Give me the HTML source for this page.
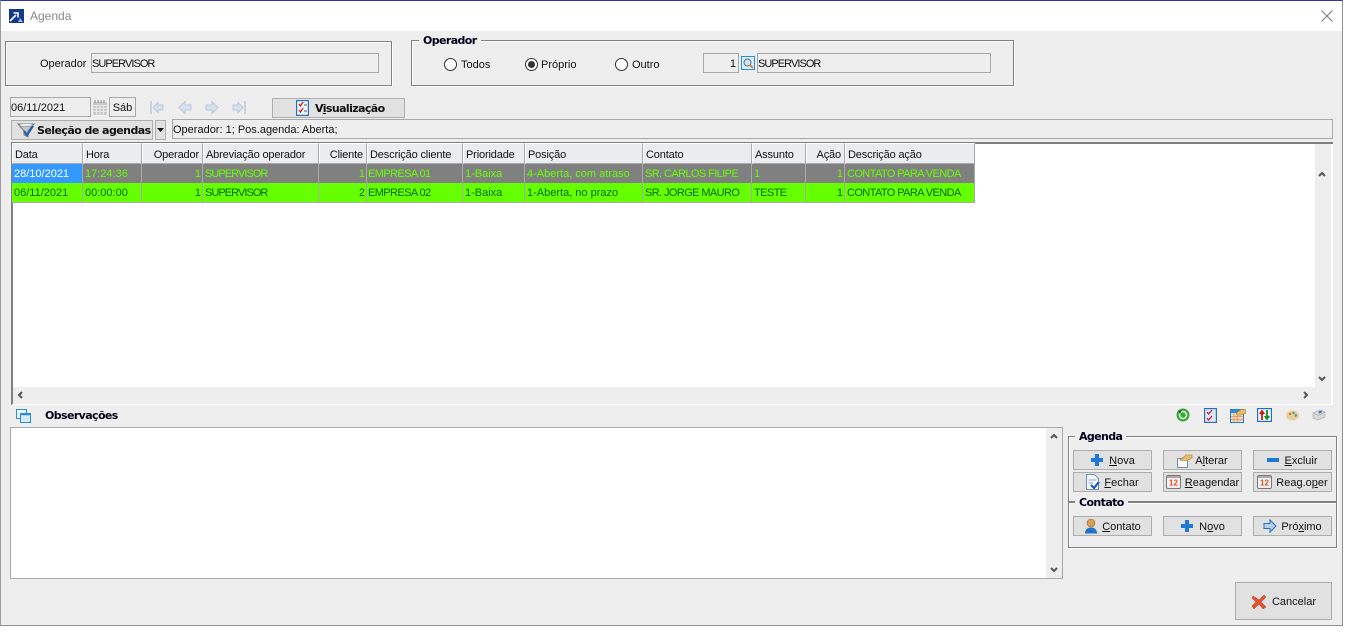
<!DOCTYPE html>
<html><head><meta charset="utf-8"><title>Agenda</title>
<style>
html,body{margin:0;padding:0;width:1357px;height:633px;overflow:hidden;background:#fff;font-family:"Liberation Sans",sans-serif;font-size:11px;color:#111}
.a{position:absolute;box-sizing:border-box;white-space:nowrap}
.win{left:0;top:0;width:1343px;height:626px;background:#eee;border:1px solid #8f8f8f;border-top:1px solid #2b35a8;border-left:1px solid #9a9a9a}
.title{left:1px;top:1px;width:1341px;height:30px;background:#fff}
.grp{border:1px solid #808080;box-shadow:1px 1px 0 #fff,inset 1px 1px 0 #fff}
.leg{background:#eee;font-family:"DejaVu Sans",sans-serif;font-weight:bold;font-size:11px;color:#00001a;padding:0 4px;line-height:13px;letter-spacing:-.6px;margin-top:1px}
.inp{background:#eee;border:1px solid #a8a8a8;line-height:20px;height:20px;padding-left:0;overflow:hidden}
.btn{background:#e1e1e1;border:1px solid #adadad;display:flex;align-items:center;justify-content:center;line-height:16px}
.btn svg{margin-right:4px;flex:none}
.btn span{position:relative;top:1px}
.t{line-height:14px;margin-top:1px}
u{text-decoration:underline}
.h{top:143px;height:21px;background:#e9edf0;border-top:1px solid #fff;border-left:1px solid #fff;border-right:1px solid #a9a9a9;border-bottom:1px solid #a9a9a9;line-height:22px;padding:0 3px 0 2px;overflow:hidden;letter-spacing:-.15px}
.c{height:20px;line-height:21px;padding:0 1px 0 2px;border-right:1px solid #a9a9a9;border-bottom:1px solid #a9a9a9;overflow:hidden}
.cap{letter-spacing:-.6px}
.sup{letter-spacing:-.95px}
.r1{top:164px;background:#808080;color:#66ff00}
.r2{top:183px;background:#66ff00;color:#0b6b00}
.r{text-align:right}
.rd{width:13px;height:13px;border:1px solid #333;border-radius:50%;background:#fff}
.rd i{position:absolute;left:2px;top:2px;width:7px;height:7px;border-radius:50%;background:#333}
svg{display:block}
.abs{position:absolute}
</style></head><body>
<div class="a win"></div>
<div class="a title"></div>
<svg class="abs" style="left:9px;top:9px" width="15" height="14" viewBox="0 0 15 14"><rect width="15" height="14" fill="#15398f"/><path d="M1 12L7 6M4.500 4H9V8.500" stroke="#fff" stroke-width="1.600" fill="none"/><path d="M9 13L11 9L14 13Z" fill="#9db4dc"/></svg>
<div class="a t" style="left:30px;top:8px;font-size:12px;color:#8a8a8a">Agenda</div>
<svg class="abs" style="left:1321px;top:10px" width="12" height="12" viewBox="0 0 12 12"><path d="M.5.500L11.500 11.500M11.500.500L.5 11.500" stroke="#777" stroke-width="1"/></svg>

<div class="a grp" style="left:5px;top:41px;width:387px;height:45px"></div>
<div class="a t" style="left:40px;top:56px">Operador</div>
<div class="a inp sup" style="left:91px;top:53px;width:288px">SUPERVISOR</div>

<div class="a grp" style="left:411px;top:40px;width:603px;height:46px"></div>
<div class="a leg" style="left:419px;top:33px">Operador</div>
<div class="a rd" style="left:444px;top:58px"></div><div class="a t" style="left:461px;top:57px">Todos</div>
<div class="a rd" style="left:525px;top:58px"><i></i></div><div class="a t" style="left:541px;top:57px">Próprio</div>
<div class="a rd" style="left:615px;top:58px"></div><div class="a t" style="left:632px;top:57px">Outro</div>
<div class="a inp" style="left:703px;top:53px;width:36px;text-align:right;padding-right:2px">1</div>
<svg class="abs" style="left:741px;top:56px" width="14" height="14" viewBox="0 0 14 14"><rect x=".5" y=".5" width="13" height="13" fill="#dbeefc" stroke="#2a8be0"/><circle cx="6.500" cy="6.500" r="3.500" fill="#cfe3f2" stroke="#55708a"/><path d="M9 9L12 12" stroke="#e08a2a" stroke-width="2"/></svg>
<div class="a inp sup" style="left:757px;top:53px;width:234px">SUPERVISOR</div>

<div class="a inp" style="left:10px;top:97px;width:81px">06/11/2021</div>
<svg class="abs" style="left:93px;top:100px" width="14" height="15" viewBox="0 0 14 15"><rect y="2" width="14" height="13" fill="#c9c9c9"/><path d="M2 0V3M5 0V3M8 0V3M11 0V3" stroke="#888"/><path d="M0 5.500H14M0 8.500H14M0 11.500H14M3.500 5V15M7 5V15M10.500 5V15" stroke="#eee" stroke-width=".8"/></svg>
<div class="a inp" style="left:109px;top:97px;width:27px;text-align:center;background:#eee">Sáb</div>
<svg class="abs" style="left:150px;top:100px" width="14" height="15" viewBox="0 0 14 15"><path d="M1 1V14" stroke="#b9c8d8" stroke-width="1.500"/><path d="M3 7.500L8 2.500V5H13V10H8V12.500Z" fill="#d6e3ef" stroke="#b9c8d8"/></svg>
<svg class="abs" style="left:178px;top:100px" width="14" height="15" viewBox="0 0 14 15"><path d="M1 7.500L7 1.500V5H13V10H7V13.500Z" fill="#d6e3ef" stroke="#b9c8d8"/></svg>
<svg class="abs" style="left:205px;top:100px" width="14" height="15" viewBox="0 0 14 15"><path d="M13 7.500L7 1.500V5H1V10H7V13.500Z" fill="#d6e3ef" stroke="#b9c8d8"/></svg>
<svg class="abs" style="left:232px;top:100px" width="14" height="15" viewBox="0 0 14 15"><path d="M13 1V14" stroke="#b9c8d8" stroke-width="1.500"/><path d="M11 7.500L6 2.500V5H1V10H6V12.500Z" fill="#d6e3ef" stroke="#b9c8d8"/></svg>
<div class="a btn" style="left:272px;top:98px;width:133px;height:20px;font-family:'DejaVu Sans',sans-serif;font-weight:bold;color:#111;letter-spacing:-.6px;justify-content:flex-start;padding-left:23px"><svg width="13" height="16" viewBox="0 0 13 16" style="margin-right:6px"><rect x=".5" y=".5" width="12" height="15" fill="#eef4fb" stroke="#2a6fb8" stroke-width="1.400"/><path d="M3 4L4.500 6L7 2M3 10L4.500 12L7 8" stroke="#d02020" fill="none" stroke-width="1.300"/><path d="M8 5H11M8 11H11" stroke="#555"/></svg><span>V<u>i</u>sualização</span></div>
<div class="a btn" style="left:11px;top:120px;width:142px;height:20px;font-family:'DejaVu Sans',sans-serif;font-weight:bold;color:#111;letter-spacing:-.55px;justify-content:flex-start;padding-left:5px"><svg width="18" height="16" viewBox="0 0 18 16" style="margin-right:2px"><path d="M1 2H17L11 9V15L7 13V9Z" fill="#c4c6c9" stroke="#777"/><ellipse cx="9" cy="3" rx="7" ry="1.500" fill="#eee" stroke="#888" stroke-width=".6"/><path d="M7 9L10 13L16 4" stroke="#1f5fb8" stroke-width="2.200" fill="none"/></svg><span>Seleção de a<u>g</u>endas</span></div>
<div class="a btn" style="left:155px;top:120px;width:11px;height:20px"><svg width="7" height="4" viewBox="0 0 7 4" style="margin:0"><path d="M0 0H7L3.500 4Z" fill="#111"/></svg></div>
<div class="a inp" style="left:172px;top:119px;width:1161px;height:20px;padding-left:0">Operador: 1; Pos.agenda: Aberta;</div>

<div class="a" style="left:11px;top:142px;width:1322px;height:263px;background:#fff;border-top:2px solid #808080;border-left:2px solid #808080;border-bottom:1px solid #fff"></div>
<div class="a" style="left:1315px;top:144px;width:16px;height:243px;background:#eee"></div>
<div class="a" style="left:13px;top:387px;width:1318px;height:17px;background:#eee"></div>

<div class="a h" style="left:12px;width:71px">Data</div>
<div class="a h" style="left:83px;width:59px">Hora</div>
<div class="a h r" style="left:142px;width:61px">Operador</div>
<div class="a h" style="left:203px;width:116px">Abreviação operador</div>
<div class="a h r" style="left:319px;width:48px">Cliente</div>
<div class="a h" style="left:367px;width:96px">Descrição cliente</div>
<div class="a h" style="left:463px;width:62px">Prioridade</div>
<div class="a h" style="left:525px;width:118px">Posição</div>
<div class="a h" style="left:643px;width:109px">Contato</div>
<div class="a h" style="left:752px;width:54px">Assunto</div>
<div class="a h r" style="left:806px;width:39px">Ação</div>
<div class="a h" style="left:845px;width:130px">Descrição ação</div>

<div class="a c r1" style="left:12px;width:71px;background:#3399ff;color:#fff">28/10/2021</div>
<div class="a c r1" style="left:83px;width:59px">17:24:36</div>
<div class="a c r1 r" style="left:142px;width:61px">1</div>
<div class="a c r1 sup" style="left:203px;width:116px">SUPERVISOR</div>
<div class="a c r1 r" style="left:319px;width:48px">1</div>
<div class="a c r1 cap" style="left:367px;width:96px;padding-left:1px">EMPRESA 01</div>
<div class="a c r1" style="left:463px;width:62px">1-Baixa</div>
<div class="a c r1" style="left:525px;width:118px">4-Aberta, com atraso</div>
<div class="a c r1 cap" style="left:643px;width:109px">SR. CARLOS FILIPE</div>
<div class="a c r1" style="left:752px;width:54px">1</div>
<div class="a c r1 r" style="left:806px;width:39px">1</div>
<div class="a c r1 cap" style="left:845px;width:130px">CONTATO PARA VENDA</div>

<div class="a c r2" style="left:12px;width:71px">06/11/2021</div>
<div class="a c r2" style="left:83px;width:59px">00:00:00</div>
<div class="a c r2 r" style="left:142px;width:61px">1</div>
<div class="a c r2 sup" style="left:203px;width:116px">SUPERVISOR</div>
<div class="a c r2 r" style="left:319px;width:48px">2</div>
<div class="a c r2 cap" style="left:367px;width:96px;padding-left:1px">EMPRESA 02</div>
<div class="a c r2" style="left:463px;width:62px">1-Baixa</div>
<div class="a c r2" style="left:525px;width:118px">1-Aberta, no prazo</div>
<div class="a c r2 cap" style="left:643px;width:109px">SR. JORGE MAURO</div>
<div class="a c r2 cap" style="left:752px;width:54px">TESTE</div>
<div class="a c r2 r" style="left:806px;width:39px">1</div>
<div class="a c r2 cap" style="left:845px;width:130px">CONTATO PARA VENDA</div>

<svg class="abs" style="left:1318px;top:171px" width="8" height="6" viewBox="0 0 8 6"><path d="M1 5L4 2L7 5" stroke="#555" stroke-width="2" fill="none"/></svg>
<svg class="abs" style="left:1318px;top:376px" width="8" height="6" viewBox="0 0 8 6"><path d="M1 1L4 4L7 1" stroke="#555" stroke-width="2" fill="none"/></svg>
<svg class="abs" style="left:17px;top:391px" width="6" height="8" viewBox="0 0 6 8"><path d="M5 1L2 4L5 7" stroke="#555" stroke-width="2" fill="none"/></svg>
<svg class="abs" style="left:1303px;top:391px" width="6" height="8" viewBox="0 0 6 8"><path d="M1 1L4 4L1 7" stroke="#555" stroke-width="2" fill="none"/></svg>

<svg class="abs" style="left:16px;top:409px" width="15" height="14" viewBox="0 0 15 14"><rect x=".5" y=".5" width="10" height="9" fill="#eef6fd" stroke="#2a8be0"/><rect x="4.500" y="4.500" width="10" height="9" fill="#d7ebfb" stroke="#2a8be0"/><path d="M5 5.500H14" stroke="#2a8be0" stroke-width="1.500"/></svg>
<div class="a t" style="left:45px;top:408px;font-family:'DejaVu Sans',sans-serif;font-weight:bold;color:#00001a;letter-spacing:-.6px">Observações</div>

<svg class="abs" style="left:1176px;top:408px" width="14" height="14" viewBox="0 0 14 14"><circle cx="7" cy="7" r="6.500" fill="#3aa63a"/><circle cx="7" cy="7" r="3.500" fill="none" stroke="#c9efc9" stroke-width="1.800"/><path d="M2 3L6 2L4 6Z" fill="#1c6e1c"/></svg>
<svg class="abs" style="left:1204px;top:408px" width="13" height="15" viewBox="0 0 13 15"><rect x=".5" y=".5" width="12" height="14" fill="#dfe9f5" stroke="#2a6fb8" stroke-width="1.400"/><path d="M3 4L4.500 6L8 2M3 10L4.500 12L8 8" stroke="#d02020" fill="none" stroke-width="1.300"/></svg>
<svg class="abs" style="left:1230px;top:408px" width="16" height="15" viewBox="0 0 16 15"><rect x=".5" y="1.500" width="13" height="13" fill="#f3d9b0" stroke="#2a7fd0"/><rect x="1" y="2" width="12" height="3" fill="#2a8be0"/><path d="M4 5V14M7.500 5V14M1 8.500H13M1 11.500H13" stroke="#e08a6a" stroke-width=".7"/><path d="M6 5L11 1.500H15.500V5.500L11 7L7 7Z" fill="#e8bb66" stroke="#9a7a3a" stroke-width=".6"/></svg>
<svg class="abs" style="left:1257px;top:408px" width="15" height="14" viewBox="0 0 15 14"><rect x=".5" y=".5" width="14" height="13" fill="#eef6fd" stroke="#1f6fc8" stroke-width="1.300"/><path d="M5 12V4M2.800 6L5 3L7.200 6" stroke="#d01818" stroke-width="1.800" fill="none"/><path d="M10 2V10M7.800 8L10 11L12.200 8" stroke="#138a2a" stroke-width="1.800" fill="none"/></svg>
<svg class="abs" style="left:1286px;top:410px" width="13" height="11" viewBox="0 0 13 11"><ellipse cx="6.500" cy="5.500" rx="6.500" ry="5" fill="#e6cf9b"/><circle cx="4" cy="4" r="1.200" fill="#d86a4a"/><circle cx="7.500" cy="3" r="1.200" fill="#5f9f4f"/><circle cx="9.800" cy="5.500" r="1.200" fill="#5a7fd0"/></svg>
<svg class="abs" style="left:1312px;top:409px" width="14" height="12" viewBox="0 0 14 12"><path d="M1 4L8 1L13 3V8L6 11L1 9Z" fill="#d8d8d8" stroke="#aaa" stroke-width=".6"/><path d="M1 4L6 6.500L13 3" fill="none" stroke="#aaa" stroke-width=".6"/><path d="M6 3L9 1.500L10.500 3L7.500 4.500Z" fill="#3a7fd0"/></svg>

<div class="a" style="left:10px;top:427px;width:1053px;height:152px;background:#fff;border:1px solid #a9a9a9"></div>
<div class="a" style="left:1046px;top:428px;width:16px;height:150px;background:#eee"></div>
<svg class="abs" style="left:1050px;top:433px" width="8" height="6" viewBox="0 0 8 6"><path d="M1 5L4 2L7 5" stroke="#555" stroke-width="2" fill="none"/></svg>
<svg class="abs" style="left:1050px;top:567px" width="8" height="6" viewBox="0 0 8 6"><path d="M1 1L4 4L7 1" stroke="#555" stroke-width="2" fill="none"/></svg>

<div class="a grp" style="left:1068px;top:436px;width:269px;height:66px"></div>
<div class="a grp" style="left:1068px;top:502px;width:269px;height:46px"></div>
<div class="a leg" style="left:1075px;top:429px">Agenda</div>
<div class="a leg" style="left:1075px;top:495px">Contato</div>

<div class="a btn" style="left:1073px;top:450px;width:79px;height:20px"><svg width="14" height="14" viewBox="0 0 14 14" style="margin-right:5px"><path d="M5 1H9V5H13V9H9V13H5V9H1V5H5Z" fill="#1e78d8"/></svg><span><u>N</u>ova</span></div>
<div class="a btn" style="left:1163px;top:450px;width:79px;height:20px"><svg width="16" height="15" viewBox="0 0 16 15" style="margin-right:2px"><rect x=".5" y="5.500" width="10" height="9" fill="#fafafa" stroke="#6f8fb8"/><path d="M3 7L9 2H15V5L10 7.500H6Z" fill="#e8bb66" stroke="#9a7a3a" stroke-width=".6"/></svg><span>A<u>l</u>terar</span></div>
<div class="a btn" style="left:1253px;top:450px;width:79px;height:20px"><svg width="12" height="4" viewBox="0 0 12 4" style="margin-right:5px"><rect width="12" height="4" fill="#1e78d8"/></svg><span><u>E</u>xcluir</span></div>
<div class="a btn" style="left:1073px;top:472px;width:79px;height:20px"><svg width="14" height="16" viewBox="0 0 14 16" style="margin-right:4px"><path d="M.5.500H8.500L12.500 4.500V15.500H.5Z" fill="#f2f6fb" stroke="#7a94b8"/><path d="M2.500 6H10M2.500 9H7" stroke="#9ab" /><path d="M5 11L8 14L13 8" stroke="#1f5fb8" stroke-width="2.200" fill="none"/></svg><span><u>F</u>echar</span></div>
<div class="a btn" style="left:1163px;top:472px;width:79px;height:20px"><svg width="15" height="15" viewBox="0 0 15 15" style="margin-right:4px;margin-top:-2px"><rect x=".5" y="1.500" width="14" height="13" rx="1.500" fill="#f3f0f7" stroke="#777"/><path d="M1 2H14V4H1Z" fill="#aaa"/><text x="7.500" y="11.500" font-size="8" font-weight="bold" text-anchor="middle" fill="#e8501c" font-family="Liberation Sans">12</text></svg><span><u>R</u>eagendar</span></div>
<div class="a btn" style="left:1253px;top:472px;width:79px;height:20px"><svg width="15" height="15" viewBox="0 0 15 15" style="margin-right:4px;margin-top:-2px"><rect x=".5" y="1.500" width="14" height="13" rx="1.500" fill="#f3f0f7" stroke="#777"/><path d="M1 2H14V4H1Z" fill="#aaa"/><text x="7.500" y="11.500" font-size="8" font-weight="bold" text-anchor="middle" fill="#e8501c" font-family="Liberation Sans">12</text></svg><span>Reag.o<u>p</u>er</span></div>
<div class="a btn" style="left:1073px;top:516px;width:79px;height:20px"><svg width="14" height="16" viewBox="0 0 14 16" style="margin-right:4px"><circle cx="7" cy="5" r="4" fill="#d8a050" stroke="#8a6a3a" stroke-width=".6"/><path d="M1 15.500C1 11 4 9.500 7 9.500S13 11 13 15.500Z" fill="#1e70c8"/></svg><span><u>C</u>ontato</span></div>
<div class="a btn" style="left:1163px;top:516px;width:79px;height:20px"><svg width="14" height="14" viewBox="0 0 14 14" style="margin-right:5px"><path d="M5 1H9V5H13V9H9V13H5V9H1V5H5Z" fill="#1e78d8"/></svg><span>N<u>o</u>vo</span></div>
<div class="a btn" style="left:1253px;top:516px;width:79px;height:20px"><svg width="14" height="14" viewBox="0 0 14 14" style="margin-right:4px"><path d="M13 7L7 1V4.500H1V9.500H7V13Z" fill="#b5d0f0" stroke="#2a6fb8"/></svg><span>Pró<u>x</u>imo</span></div>
<div class="a btn" style="left:1235px;top:582px;width:97px;height:38px"><svg width="16" height="15" viewBox="0 0 16 15" style="margin-right:5px"><path d="M2 2L8 6L13 1L15 3L10 8L15 13L12 15L8 10L3 15L1 12L5 8L1 4Z" fill="#e6502a" stroke="#b93a1a" stroke-width=".5"/></svg><span>Cancelar</span></div>
</body></html>
